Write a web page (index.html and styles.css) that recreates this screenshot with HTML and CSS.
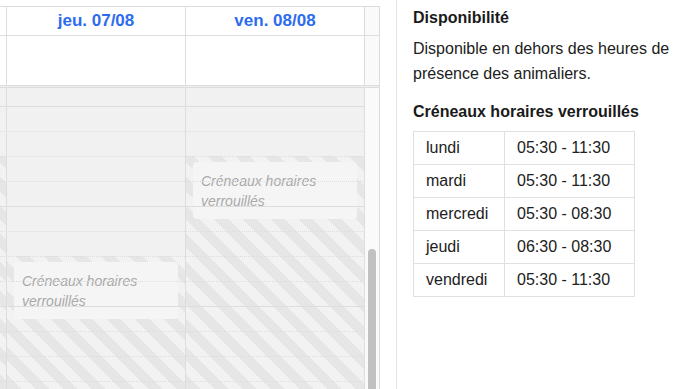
FILE: index.html
```html
<!DOCTYPE html>
<html>
<head>
    <title>Disponibilité - Planning</title>
    <link rel="stylesheet" href="styles.css">
</head>
<body>
    <div class="page">
        <div class="calendar">
            <div class="row head">
                <div class="col edge"></div>
                <div class="col day"><span class="day-title">jeu. 07/08</span></div>
                <div class="col day"><span class="day-title">ven. 08/08</span></div>
                <div class="gutter"></div>
            </div>
            <div class="row allday">
                <div class="col edge"></div>
                <div class="col day"></div>
                <div class="col day"></div>
                <div class="gutter"></div>
            </div>
            <div class="divider"></div>
            <div class="row grid">
                <!-- mer. 06/08 : 05:30 - 08:30 -->
                <div class="col edge">
                    <div class="locked" style="top: 68px"></div>
                </div>
                <!-- jeu. 07/08 : 06:30 - 08:30 -->
                <div class="col day">
                    <div class="locked" style="top: 168px">
                        <div class="locked-label">Créneaux horaires verrouillés</div>
                    </div>
                </div>
                <!-- ven. 08/08 : 05:30 - 11:30 -->
                <div class="col day">
                    <div class="locked" style="top: 68px">
                        <div class="locked-label">Créneaux horaires verrouillés</div>
                    </div>
                </div>
                <div class="gutter"><div class="thumb"></div></div>

                <div class="slats">
                    <div class="slat first"></div>
                    <div class="slat hour"></div>
                    <div class="slat"></div>
                    <div class="slat"></div>
                    <div class="slat"></div>
                    <div class="slat hour"></div>
                    <div class="slat"></div>
                    <div class="slat"></div>
                    <div class="slat"></div>
                    <div class="slat hour"></div>
                    <div class="slat"></div>
                    <div class="slat"></div>
                    <div class="slat"></div>
                </div>
            </div>
        </div>

        <div class="side">
            <h6>Disponibilité</h6>
            <p>Disponible en dehors des heures de présence des animaliers.</p>
            <h6 class="sub">Créneaux horaires verrouillés</h6>
            <table class="slots">
                <tr><td>lundi</td><td>05:30 - 11:30</td></tr>
                <tr><td>mardi</td><td>05:30 - 11:30</td></tr>
                <tr><td>mercredi</td><td>05:30 - 08:30</td></tr>
                <tr><td>jeudi</td><td>06:30 - 08:30</td></tr>
                <tr><td>vendredi</td><td>05:30 - 11:30</td></tr>
            </table>
        </div>
    </div>
</body>
</html>
```

FILE: styles.css
```css
html, body { margin: 0; height: 389px; overflow: hidden; background: #fff; }
body { font-family: "Liberation Sans", Arial, sans-serif; color: #212121; }
.page { display: flex; align-items: stretch; height: 389px; }

/* calendar */
.calendar { width: 379px; margin-top: 6px; border-top: 1px solid #ddd; border-right: 1px solid #ddd; flex: none; display: flex; flex-direction: column; }
.row { display: flex; }
.col { border-right: 1px solid #ddd; }
.edge { width: 6px; }
.day { flex: 1; }
.gutter { width: 14px; background: #fafafa; }
.head { height: 28px; border-bottom: 1px solid #ddd; }
.head .day { display: flex; align-items: center; justify-content: center; }
.day-title { color: #2d6cf0; font-weight: 700; font-size: 17px; }
.allday { height: 49px; border-bottom: 1px solid #ddd; }
.divider { height: 1px; background: #eee; border-bottom: 1px solid #ddd; }
.grid { flex: 1; position: relative; overflow: hidden; }
.grid .col { position: relative; background: #f1f1f1; }
.locked { position: absolute; left: 0; right: 0; bottom: 0; background: repeating-linear-gradient(45deg, #e6e6e6, #e6e6e6 10px, #f2f2f2 10px, #f2f2f2 20px); }
.locked-label { margin: 6px 7px 0; padding: 9px 8px 8px; background: #f5f5f5; border-radius: 4px; font-size: 14px; line-height: 20px; font-style: italic; color: #a9a9a9; }
.gutter .thumb { width: 8px; margin: 161px 0 0 3px; height: 200px; border-radius: 4px; background: #c1c1c1; }
.slats { position: absolute; top: 0; left: 0; right: 14px; pointer-events: none; }
.slat { height: 24px; border-top: 1px dotted #ddd; }
.slat.hour { border-top-style: solid; }
.slat.first { height: 18px; border-top: 0; }

/* side panel */
.side { flex: 1; margin-left: 16px; padding: 8px 0 0 16px; border-left: 1px solid #e3e3e8; }
.side h6 { margin: 0 0 8px; font-size: 16px; line-height: 20px; font-weight: 700; color: #1a1a1a; }
.side h6.sub { margin-bottom: 9px; }
.side p { margin: 0 0 16px; font-size: 16px; line-height: 25px; }
.slots { border-collapse: collapse; table-layout: fixed; width: 222px; font-size: 16px; }
.slots td { border: 1px solid #e0e0e0; padding: 6px 12px; line-height: 20px; }
.slots td:first-child { width: 66px; }
```
